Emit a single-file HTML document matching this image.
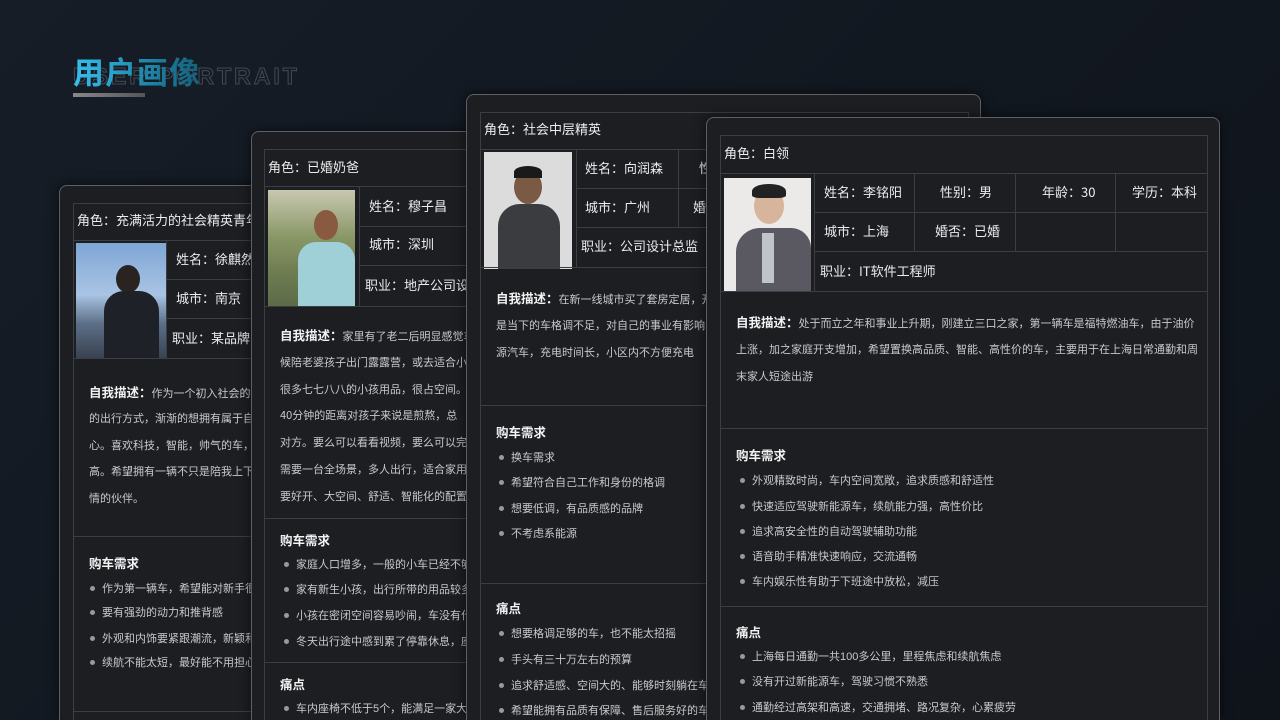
<!DOCTYPE html>
<html style="width:1280px;height:720px;overflow:hidden"><head><meta charset="utf-8"><style>
*{margin:0;padding:0;box-sizing:border-box}
body{width:1280px;height:720px;overflow:hidden;position:relative;font-family:"Liberation Sans","Noto Sans CJK SC",sans-serif;
background:
linear-gradient(45deg,rgba(255,255,255,0.025) 1px,transparent 1px) 0 0/8px 8px,
linear-gradient(-45deg,rgba(255,255,255,0.025) 1px,transparent 1px) 0 0/8px 8px,
linear-gradient(135deg,#161d27 0%,#121820 50%,#0f141b 100%);}
.t1{position:absolute;left:73px;top:48px;font-size:31px;font-weight:bold;letter-spacing:1px;background:linear-gradient(90deg,#35c0ef,#1a7a9a 70%,#165f78);-webkit-background-clip:text;color:transparent;z-index:2}
.t2{position:absolute;left:73px;top:63px;font-size:23px;font-weight:bold;letter-spacing:3px;color:transparent;-webkit-text-stroke:1px rgba(120,130,140,0.45);z-index:1}
.bar{position:absolute;left:73px;top:93px;width:72px;height:4px;background:linear-gradient(90deg,#888,#555)}
.card{position:absolute;background:#1c1e22;border:1.5px solid #5d6066;border-bottom:none;border-radius:8px 8px 0 0;overflow:hidden;box-shadow:0 0 12px rgba(0,0,0,.6)}
.card div{position:absolute;white-space:nowrap}
.h{height:1px;background:#3b3e43}
.v{width:1px;background:#3b3e43}
.tx{color:#ececec;font-size:13px;line-height:16px;font-family:"Noto Sans CJK SC",sans-serif}
.d{color:#c9c9c9;font-size:11px;line-height:14px;font-family:"Noto Sans CJK SC",sans-serif}
.d b{color:#f2f2f2;font-size:12.5px}
.hd{color:#f2f2f2;font-size:12.5px;font-weight:bold;line-height:14px;font-family:"Noto Sans CJK SC",sans-serif}
.bl{color:#c9c9c9;font-size:11px;line-height:14px}
.bl:before{content:"";position:absolute;left:-12px;top:4px;width:5px;height:5px;border-radius:50%;background:#9a9a9a}
.ph{overflow:hidden}
</style></head><body>
<div class="t2">USER PORTRAIT</div>
<div class="t1">用户画像</div>
<div class="bar"></div>

<!-- card1 -->
<div class="card" style="left:59px;top:185px;width:520px;height:535px">
<div class="h" style="left:13px;top:17px;width:495px"></div>
<div class="v" style="left:13px;top:17px;height:560px"></div>
<div class="tx" style="left:17px;top:26px">角色：充满活力的社会精英青年</div>
<div class="h" style="left:13px;top:54px;width:495px"></div>
<div class="h" style="left:106px;top:93px;width:400px"></div>
<div class="h" style="left:106px;top:132px;width:400px"></div>
<div class="v" style="left:106px;top:54px;height:118px"></div>
<div class="ph" style="left:16px;top:57px;width:90px;height:115px;background:linear-gradient(180deg,#7fa6d6 0%,#a9c4e4 45%,#5c6f88 70%,#3a4250 100%)"><div style="left:40px;top:22px;width:24px;height:28px;border-radius:50%;background:#2a2420"></div><div style="left:28px;top:48px;width:55px;height:70px;border-radius:20px 20px 0 0;background:#1e2128"></div></div>
<div class="tx" style="left:116px;top:65px">姓名：徐麒然</div>
<div class="tx" style="left:116px;top:104px">城市：南京</div>
<div class="tx" style="left:112px;top:144px">职业：某品牌</div>
<div class="h" style="left:13px;top:172px;width:495px"></div>
<div class="d" style="left:29px;top:199px"><b>自我描述：</b>作为一个初入社会的年轻人，逐渐有了自己</div>
<div class="d" style="left:29px;top:225px">的出行方式，渐渐的想拥有属于自己的车</div>
<div class="d" style="left:29px;top:252px">心。喜欢科技，智能，帅气的车，对</div>
<div class="d" style="left:29px;top:278px">高。希望拥有一辆不只是陪我上下班</div>
<div class="d" style="left:29px;top:305px">情的伙伴。</div>
<div class="h" style="left:13px;top:350px;width:495px"></div>
<div class="hd" style="left:29px;top:370px">购车需求</div>
<div class="bl" style="left:42px;top:396px">作为第一辆车，希望能对新手很友好</div>
<div class="bl" style="left:42px;top:420px">要有强劲的动力和推背感</div>
<div class="bl" style="left:42px;top:446px">外观和内饰要紧跟潮流，新颖和个性</div>
<div class="bl" style="left:42px;top:470px">续航不能太短，最好能不用担心</div>
<div class="h" style="left:13px;top:525px;width:495px"></div>
</div>

<!-- card2 -->
<div class="card" style="left:251px;top:131px;width:520px;height:589px">
<div class="h" style="left:12px;top:17px;width:495px"></div>
<div class="v" style="left:12px;top:17px;height:620px"></div>
<div class="tx" style="left:16px;top:27px">角色：已婚奶爸</div>
<div class="h" style="left:12px;top:54px;width:495px"></div>
<div class="h" style="left:107px;top:94px;width:400px"></div>
<div class="h" style="left:107px;top:133px;width:400px"></div>
<div class="v" style="left:107px;top:54px;height:120px"></div>
<div class="ph" style="left:16px;top:58px;width:87px;height:116px;background:linear-gradient(180deg,#c9c8b0 0%,#8a9868 40%,#6f7d52 70%,#5d6a48 100%)"><div style="left:46px;top:20px;width:24px;height:30px;border-radius:50%;background:#8a5a40"></div><div style="left:30px;top:52px;width:57px;height:64px;border-radius:18px 18px 0 0;background:#9fd0d8"></div></div>
<div class="tx" style="left:117px;top:66px">姓名：穆子昌</div>
<div class="tx" style="left:117px;top:104px">城市：深圳</div>
<div class="tx" style="left:113px;top:145px">职业：地产公司设计师</div>
<div class="h" style="left:12px;top:174px;width:495px"></div>
<div class="d" style="left:28px;top:196px"><b>自我描述：</b>家里有了老二后明显感觉车内空间不够用，周末时</div>
<div class="d" style="left:28px;top:223px">候陪老婆孩子出门露露营，或去适合小孩</div>
<div class="d" style="left:28px;top:250px">很多七七八八的小孩用品，很占空间。</div>
<div class="d" style="left:28px;top:276px">40分钟的距离对孩子来说是煎熬，总</div>
<div class="d" style="left:28px;top:303px">对方。要么可以看看视频，要么可以完全</div>
<div class="d" style="left:28px;top:330px">需要一台全场景，多人出行，适合家用的</div>
<div class="d" style="left:28px;top:357px">要好开、大空间、舒适、智能化的配置</div>
<div class="h" style="left:12px;top:386px;width:495px"></div>
<div class="hd" style="left:28px;top:401px">购车需求</div>
<div class="bl" style="left:44px;top:426px">家庭人口增多，一般的小车已经不够</div>
<div class="bl" style="left:44px;top:451px">家有新生小孩，出行所带的用品较多</div>
<div class="bl" style="left:44px;top:477px">小孩在密闭空间容易吵闹，车没有什么</div>
<div class="bl" style="left:44px;top:503px">冬天出行途中感到累了停靠休息，座椅</div>
<div class="h" style="left:12px;top:530px;width:495px"></div>
<div class="hd" style="left:28px;top:545px">痛点</div>
<div class="bl" style="left:44px;top:570px">车内座椅不低于5个，能满足一家大小</div>
</div>

<!-- card3 -->
<div class="card" style="left:466px;top:94px;width:515px;height:626px">
<div class="h" style="left:13px;top:17px;width:489px"></div>
<div class="v" style="left:13px;top:17px;height:640px"></div>
<div class="v" style="left:501px;top:17px;height:640px"></div>
<div class="tx" style="left:17px;top:26px">角色：社会中层精英</div>
<div class="h" style="left:13px;top:54px;width:489px"></div>
<div class="h" style="left:109px;top:93px;width:393px"></div>
<div class="h" style="left:109px;top:132px;width:393px"></div>
<div class="v" style="left:109px;top:54px;height:118px"></div>
<div class="v" style="left:211px;top:54px;height:78px"></div>
<div class="ph" style="left:17px;top:57px;width:88px;height:117px;background:#dcdcdc"><div style="left:30px;top:18px;width:28px;height:34px;border-radius:50%;background:#7a5a44"></div><div style="left:30px;top:14px;width:28px;height:12px;border-radius:50% 50% 0 0;background:#1a1a1a"></div><div style="left:14px;top:52px;width:62px;height:66px;border-radius:22px 22px 0 0;background:#3a3c40"></div></div>
<div class="tx" style="left:118px;top:65px">姓名：向润森</div>
<div class="tx" style="left:232px;top:65px">性别：男</div>
<div class="tx" style="left:118px;top:104px">城市：广州</div>
<div class="tx" style="left:226px;top:104px">婚否：已婚</div>
<div class="tx" style="left:114px;top:143px">职业：公司设计总监</div>
<div class="h" style="left:13px;top:172px;width:489px"></div>
<div class="d" style="left:29px;top:196px"><b>自我描述：</b>在新一线城市买了套房定居，开着一辆燃油车，但</div>
<div class="d" style="left:29px;top:223px">是当下的车格调不足，对自己的事业有影响，想换一辆新能</div>
<div class="d" style="left:29px;top:250px">源汽车，充电时间长，小区内不方便充电</div>
<div class="h" style="left:13px;top:310px;width:489px"></div>
<div class="hd" style="left:29px;top:330px">购车需求</div>
<div class="bl" style="left:44px;top:356px">换车需求</div>
<div class="bl" style="left:44px;top:381px">希望符合自己工作和身份的格调</div>
<div class="bl" style="left:44px;top:407px">想要低调，有品质感的品牌</div>
<div class="bl" style="left:44px;top:432px">不考虑系能源</div>
<div class="h" style="left:13px;top:488px;width:489px"></div>
<div class="hd" style="left:29px;top:506px">痛点</div>
<div class="bl" style="left:44px;top:532px">想要格调足够的车，也不能太招摇</div>
<div class="bl" style="left:44px;top:558px">手头有三十万左右的预算</div>
<div class="bl" style="left:44px;top:584px">追求舒适感、空间大的、能够时刻躺在车里</div>
<div class="bl" style="left:44px;top:609px">希望能拥有品质有保障、售后服务好的车</div>
</div>

<!-- card4 -->
<div class="card" style="left:706px;top:117px;width:514px;height:603px">
<div class="h" style="left:13px;top:17px;width:488px"></div>
<div class="v" style="left:13px;top:17px;height:620px"></div>
<div class="v" style="left:500px;top:17px;height:620px"></div>
<div class="tx" style="left:17px;top:27px">角色：白领</div>
<div class="h" style="left:13px;top:55px;width:488px"></div>
<div class="h" style="left:107px;top:94px;width:394px"></div>
<div class="h" style="left:107px;top:133px;width:394px"></div>
<div class="v" style="left:107px;top:55px;height:118px"></div>
<div class="v" style="left:207px;top:55px;height:78px"></div>
<div class="v" style="left:308px;top:55px;height:78px"></div>
<div class="v" style="left:408px;top:55px;height:78px"></div>
<div class="ph" style="left:17px;top:60px;width:87px;height:113px;background:#eceae8"><div style="left:30px;top:10px;width:30px;height:36px;border-radius:50%;background:#d7b49c"></div><div style="left:28px;top:6px;width:34px;height:14px;border-radius:50% 50% 20% 20%;background:#222"></div><div style="left:12px;top:50px;width:75px;height:65px;border-radius:24px 20px 0 0;background:#5a5860"></div><div style="left:38px;top:55px;width:12px;height:50px;background:#c0c4c8"></div></div>
<div class="tx" style="left:117px;top:66px">姓名：李铭阳</div>
<div class="tx" style="left:233px;top:66px">性别：男</div>
<div class="tx" style="left:335px;top:66px">年龄：30</div>
<div class="tx" style="left:425px;top:66px">学历：本科</div>
<div class="tx" style="left:117px;top:105px">城市：上海</div>
<div class="tx" style="left:228px;top:105px">婚否：已婚</div>
<div class="tx" style="left:113px;top:145px">职业：IT软件工程师</div>
<div class="h" style="left:13px;top:173px;width:488px"></div>
<div class="d" style="left:29px;top:197px"><b>自我描述：</b>处于而立之年和事业上升期，刚建立三口之家，第一辆车是福特燃油车，由于油价</div>
<div class="d" style="left:29px;top:224px">上涨，加之家庭开支增加，希望置换高品质、智能、高性价的车，主要用于在上海日常通勤和周</div>
<div class="d" style="left:29px;top:251px">末家人短途出游</div>
<div class="h" style="left:13px;top:310px;width:488px"></div>
<div class="hd" style="left:29px;top:330px">购车需求</div>
<div class="bl" style="left:45px;top:356px">外观精致时尚，车内空间宽敞，追求质感和舒适性</div>
<div class="bl" style="left:45px;top:382px">快速适应驾驶新能源车，续航能力强，高性价比</div>
<div class="bl" style="left:45px;top:407px">追求高安全性的自动驾驶辅助功能</div>
<div class="bl" style="left:45px;top:432px">语音助手精准快速响应，交流通畅</div>
<div class="bl" style="left:45px;top:457px">车内娱乐性有助于下班途中放松，减压</div>
<div class="h" style="left:13px;top:488px;width:488px"></div>
<div class="hd" style="left:29px;top:507px">痛点</div>
<div class="bl" style="left:45px;top:532px">上海每日通勤一共100多公里，里程焦虑和续航焦虑</div>
<div class="bl" style="left:45px;top:557px">没有开过新能源车，驾驶习惯不熟悉</div>
<div class="bl" style="left:45px;top:583px">通勤经过高架和高速，交通拥堵、路况复杂，心累疲劳</div>
</div>
</body></html>
